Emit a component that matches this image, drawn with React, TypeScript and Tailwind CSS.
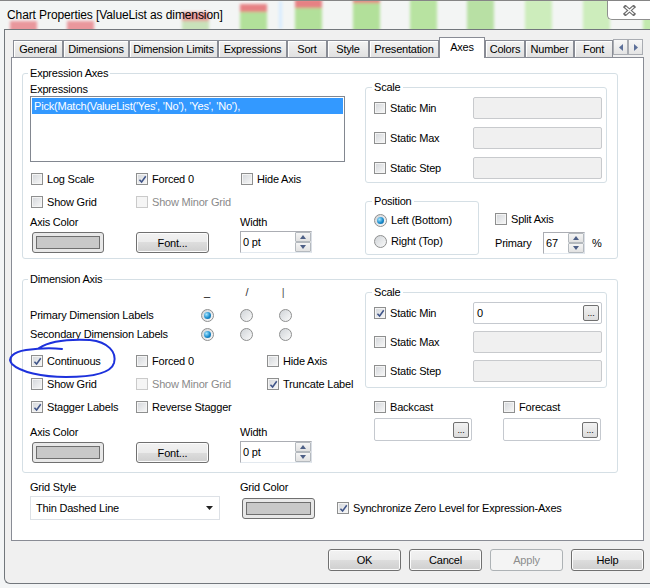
import type { ReactNode } from 'react';

const tabs = [
  { label: 'General', w: 'w-[50px]' },
  { label: 'Dimensions', w: 'w-[66px]' },
  { label: 'Dimension Limits', w: 'w-[89px]' },
  { label: 'Expressions', w: 'w-[69px]' },
  { label: 'Sort', w: 'w-[40px]' },
  { label: 'Style', w: 'w-[42px]' },
  { label: 'Presentation', w: 'w-[70px]' },
  { label: 'Axes', w: 'w-[46px]', active: true },
  { label: 'Colors', w: 'w-[40px]' },
  { label: 'Number', w: 'w-[49px]' },
  { label: 'Font', w: 'w-[39px]' },
];

// title bar glass: blurred chart bars behind the window
const blobs = [
  { x: 10, y: 20, h: 12, c: '#e9979c' },
  { x: 67, y: 20, h: 12, c: '#e9979c' },
  { x: 182, y: 11, h: 9, c: '#e79a9a' },
  { x: 182, y: 20, h: 12, c: '#c9e2ba' },
  { x: 240, y: 3, h: 8, c: '#e68184' },
  { x: 240, y: 11, h: 20, c: '#b2e09a' },
  { x: 295, y: -2, h: 9, c: '#e68184' },
  { x: 295, y: 7, h: 24, c: '#b2e09a' },
  { x: 353, y: -2, h: 4, c: '#e68184' },
  { x: 353, y: 2, h: 29, c: '#b2e09a' },
  { x: 410, y: -2, h: 33, c: '#b8e3a1' },
  { x: 467, y: -2, h: 33, c: '#b8e0a4' },
  { x: 525, y: -2, h: 33, c: '#cdedbc' },
  { x: 583, y: -2, h: 33, c: '#cdedbc' },
  { x: 643, y: -2, h: 33, c: '#c2eaae' },
];

function TitleBar() {
  return (
    <div className="relative flex h-[29px] justify-between border-t border-[#858585]">
      <svg className="absolute inset-0" width="650" height="28" viewBox="0 0 650 28">
        <defs>
          <filter id="glass" x="-20%" y="-20%" width="140%" height="140%">
            <feGaussianBlur stdDeviation="1.6" />
          </filter>
        </defs>
        <rect width="650" height="28" fill="#f3f5f4" />
        <g filter="url(#glass)">
          {blobs.map((b, i) => (
            <rect key={i} x={b.x} y={b.y} width="27" height={b.h} fill={b.c} />
          ))}
          <rect x="279" y="0" width="3" height="28" fill="#d6ebff" />
        </g>
      </svg>
      <span className="relative pl-[7px] pt-[7px] text-[12px] leading-[14px] tracking-[-0.1px]">
        Chart Properties [ValueList as dimension]
      </span>
      <span className="relative flex h-[19px] w-[43px] items-center justify-center rounded-bl-[5px] border-b border-l border-[#8f8f8f] bg-white">
        <svg width="13" height="11" viewBox="0 0 13 11">
          <path d="M2.5 2 L10.5 9 M10.5 2 L2.5 9" stroke="#6b6b6b" strokeWidth="3.6" strokeLinecap="square" />
          <path d="M2.5 2 L10.5 9 M10.5 2 L2.5 9" stroke="#fff" strokeWidth="1.4" />
        </svg>
      </span>
    </div>
  );
}

function Box({ on = false, off = false }: { on?: boolean; off?: boolean }) {
  return (
    <span
      className={
        off
          ? 'flex h-[12px] w-[12px] shrink-0 border border-[#cacaca] bg-[#f5f5f5]'
          : 'flex h-[12px] w-[12px] shrink-0 items-center justify-center border border-[#8e8f8f] bg-gradient-to-br from-[#d3d6da] to-[#f8f8f8] shadow-[inset_0_0_0_1px_#f4f4f4]'
      }
    >
      {on && (
        <svg viewBox="0 0 10 10" className="h-[9px] w-[9px]">
          <path d="M1.6 5.2 L4 7.8 L8.6 1.4" fill="none" stroke="#3f5488" strokeWidth="1.7" />
        </svg>
      )}
    </span>
  );
}

function Check({ label, on = false, off = false }: { label: string; on?: boolean; off?: boolean }) {
  return (
    <div className="flex h-[14px] items-center gap-[4px] whitespace-nowrap">
      <Box on={on} off={off} />
      <span className={off ? 'text-[#8a8a8a]' : ''}>{label}</span>
    </div>
  );
}

function Radio({ on = false }: { on?: boolean }) {
  return (
    <span className="flex h-[13px] w-[13px] shrink-0 items-center justify-center rounded-full border border-[#8e8f8f] bg-gradient-to-br from-[#d0d4d8] to-[#fafafa]">
      {on && (
        <span className="h-[7px] w-[7px] rounded-full bg-[radial-gradient(circle_at_35%_35%,#a6e6ff,#1a8bcc_55%,#0b5a8f)]" />
      )}
    </span>
  );
}

function Button({ children, className, disabled = false }: { children: ReactNode; className: string; disabled?: boolean }) {
  return (
    <div
      className={
        disabled
          ? `flex items-center justify-center rounded-[3px] border border-[#adb2b5] bg-[#f4f4f4] text-[#8d8d8d] ${className}`
          : `flex items-center justify-center rounded-[3px] border border-[#707070] bg-[linear-gradient(#f2f2f2,#ebebeb_50%,#dddddd_50%,#cfcfcf)] shadow-[inset_0_0_0_1px_#fcfcfc] ${className}`
      }
    >
      {children}
    </div>
  );
}

function Swatch({ className }: { className: string }) {
  return (
    <div className={`rounded-[3px] border border-[#707070] bg-[#e8e8e8] p-[3px] ${className}`}>
      <div className="h-full w-full border border-[#6e6e6e] bg-[#c8c8c8]" />
    </div>
  );
}

function Dots() {
  return (
    <span className="flex h-[16px] w-[16px] items-end justify-center rounded-[2px] border border-[#707070] bg-[linear-gradient(#f2f2f2,#dcdcdc)] pb-[2px] text-[9px] leading-[9px]">
      ...
    </span>
  );
}

function Field({ className, value, dots = false, on = false }: { className: string; value?: string; dots?: boolean; on?: boolean }) {
  return (
    <div
      className={
        on || dots
          ? `flex items-center justify-between rounded-[2px] border border-[#c5c9cf] bg-white pl-[3px] pr-[2px] ${className}`
          : `rounded-[2px] border border-[#c8cacd] bg-[#f0f0f0] ${className}`
      }
    >
      <span>{value}</span>
      {dots && <Dots />}
    </div>
  );
}

function Arrow({ up }: { up?: boolean }) {
  return (
    <span className="flex h-[10px] w-[16px] items-center justify-center rounded-[1px] border border-[#b4b9be] bg-gradient-to-b from-[#f5f5f5] to-[#e2e2e2]">
      <svg width="6" height="4" viewBox="0 0 6 4">
        <path d={up ? 'M0 4 L3 0 L6 4 Z' : 'M0 0 L6 0 L3 4 Z'} fill="#4d5f86" />
      </svg>
    </span>
  );
}

function Spin({ value, className }: { value: string; className: string }) {
  return (
    <div className={`flex border border-[#abadb3] border-b-[#e3e9ef] border-r-[#dbdfe6] bg-white ${className}`}>
      <span className="flex-1 pl-[2px] pt-[3px]">{value}</span>
      <div className="flex flex-col justify-center">
        <Arrow up />
        <Arrow />
      </div>
    </div>
  );
}

function Group({ title, className, children }: { title: string; className: string; children: ReactNode }) {
  return (
    <fieldset className={`rounded-[3px] border border-[#d5dfe5] ${className}`}>
      <legend className="ml-[6px] px-[2px] leading-[14px]">{title}</legend>
      {children}
    </fieldset>
  );
}

function ScaleRow({ label, on = false, value, dots = false }: { label: string; on?: boolean; value?: string; dots?: boolean }) {
  return (
    <div className="flex items-center">
      <div className="w-[99px]">
        <Check label={label} on={on} />
      </div>
      <Field className="h-[22px] w-[129px]" value={value} dots={dots} on={on} />
    </div>
  );
}

function ExpressionAxes() {
  return (
    <fieldset className="h-[193px] w-[596px] rounded-[3px] border border-[#d5dfe5]">
      <legend className="ml-[5px] px-[2px] leading-[14px]">Expression Axes</legend>
      <div className="flex">
        <div className="ml-[7px] w-[315px]">
          <div className="mt-[2px]">Expressions</div>
          <div className="h-[66px] border border-[#828790] bg-white p-[1px]">
            <div className="h-[16px] bg-[#3399ff] pl-[2px] leading-[16px] text-white">
              Pick(Match(ValueList('Yes', 'No'), 'Yes', 'No'),
            </div>
          </div>
          <div className="mt-[10px] grid grid-cols-[105px_105px_auto] pl-[1px]">
            <Check label="Log Scale" />
            <Check label="Forced 0" on />
            <Check label="Hide Axis" />
          </div>
          <div className="mt-[9px] grid grid-cols-[105px_105px_auto] pl-[1px]">
            <Check label="Show Grid" />
            <Check label="Show Minor Grid" off />
          </div>
          <div className="mt-[6px] grid grid-cols-[210px_auto]">
            <span>Axis Color</span>
            <span>Width</span>
          </div>
          <div className="mt-[2px] flex items-start">
            <Swatch className="ml-[2px] mt-[1px] h-[21px] w-[72px]" />
            <Button className="ml-[32px] mt-[1px] h-[21px] w-[73px]">Font...</Button>
            <Spin value="0 pt" className="ml-[31px] h-[22px] w-[72px]" />
          </div>
        </div>
        <div className="ml-[20px] w-[242px]">
          <Group title="Scale" className="h-[103px] w-[242px]">
            <div className="mt-[3px] flex flex-col gap-[8px] pl-[8px]">
              <ScaleRow label="Static Min" />
              <ScaleRow label="Static Max" />
              <ScaleRow label="Static Step" />
            </div>
          </Group>
          <div className="mt-[11px] flex">
            <Group title="Position" className="h-[61px] w-[114px]">
              <div className="mt-[5px] flex flex-col gap-[7px] pl-[8px]">
                <div className="flex h-[14px] items-center gap-[4px]">
                  <Radio on />
                  <span>Left (Bottom)</span>
                </div>
                <div className="flex h-[14px] items-center gap-[4px]">
                  <Radio />
                  <span>Right (Top)</span>
                </div>
              </div>
            </Group>
            <div className="ml-[16px] mt-[18px]">
              <Check label="Split Axis" />
              <div className="mt-[6px] flex items-center">
                <span className="w-[48px]">Primary</span>
                <Spin value="67" className="h-[22px] w-[42px]" />
                <span className="ml-[7px]">%</span>
              </div>
            </div>
          </div>
        </div>
      </div>
    </fieldset>
  );
}

function DimensionAxis() {
  return (
    <fieldset className="mt-[13px] h-[201px] w-[596px] rounded-[3px] border border-[#d5dfe5]">
      <legend className="ml-[5px] px-[2px] leading-[14px]">Dimension Axis</legend>
      <div className="flex">
        <div className="ml-[7px] w-[315px]">
          <div className="flex h-[12px] pl-[171px] leading-[12px]">
            <span className="w-[39px]"><span className="block w-[12px] text-center">_</span></span>
            <span className="w-[39px]"><span className="block w-[14px] text-center text-[#333]">/</span></span>
            <span className="w-[39px]"><span className="block w-[8px] text-center text-[#555]">|</span></span>
          </div>
          <div className="mt-[10px] flex h-[14px] items-center">
            <span className="w-[171px]">Primary Dimension Labels</span>
            <span className="w-[39px]"><Radio on /></span>
            <span className="w-[39px]"><Radio /></span>
            <span className="w-[39px]"><Radio /></span>
          </div>
          <div className="mt-[5px] flex h-[14px] items-center">
            <span className="w-[171px]">Secondary Dimension Labels</span>
            <span className="w-[39px]"><Radio on /></span>
            <span className="w-[39px]"><Radio /></span>
            <span className="w-[39px]"><Radio /></span>
          </div>
          <div className="mt-[13px] grid grid-cols-[105px_131px_auto] pl-[1px]">
            <Check label="Continuous" on />
            <Check label="Forced 0" />
            <Check label="Hide Axis" />
          </div>
          <div className="mt-[9px] grid grid-cols-[105px_131px_auto] pl-[1px]">
            <Check label="Show Grid" />
            <Check label="Show Minor Grid" off />
            <Check label="Truncate Label" on />
          </div>
          <div className="mt-[9px] grid grid-cols-[105px_131px_auto] pl-[1px]">
            <Check label="Stagger Labels" on />
            <Check label="Reverse Stagger" />
          </div>
          <div className="mt-[11px] grid grid-cols-[210px_auto]">
            <span>Axis Color</span>
            <span>Width</span>
          </div>
          <div className="mt-[2px] flex items-start">
            <Swatch className="ml-[2px] mt-[1px] h-[21px] w-[72px]" />
            <Button className="ml-[32px] mt-[1px] h-[21px] w-[73px]">Font...</Button>
            <Spin value="0 pt" className="ml-[31px] h-[22px] w-[72px]" />
          </div>
        </div>
        <div className="ml-[20px] w-[242px]">
          <Group title="Scale" className="-mt-[1px] h-[103px] w-[242px]">
            <div className="mt-[3px] flex flex-col gap-[7px] pl-[8px]">
              <ScaleRow label="Static Min" on value="0" dots />
              <ScaleRow label="Static Max" />
              <ScaleRow label="Static Step" />
            </div>
          </Group>
          <div className="mt-[12px] flex pl-[9px]">
            <div className="w-[129px]">
              <Check label="Backcast" />
            </div>
            <Check label="Forecast" />
          </div>
          <div className="mt-[4px] flex pl-[9px]">
            <Field className="h-[23px] w-[98px]" dots />
            <Field className="ml-[31px] h-[23px] w-[98px]" dots />
          </div>
        </div>
      </div>
    </fieldset>
  );
}

function Scribble() {
  return (
    <svg className="pointer-events-none absolute left-0 top-0" width="650" height="588" viewBox="0 0 650 588">
      <path
        d="M39 348 C50 341 70 339 90 340 C108 342 117 352 114 363 C111 373 92 377 66 377 C42 377 20 372 12 364 C7 358 13 352 26 350 C40 348 54 348 62 349"
        fill="none"
        stroke="#1d31dc"
        strokeWidth="2"
        strokeLinecap="round"
      />
    </svg>
  );
}

export default function App() {
  return (
    <div className="relative h-[588px] w-[650px] overflow-hidden bg-[#f3f5f6] font-['Liberation_Sans',Arial,sans-serif] text-[11px] leading-[14px] tracking-[-0.2px] text-black">
      <TitleBar />
      <div className="ml-[4px] h-[555px] w-[660px] rounded-bl-[6px] border-b border-l border-t border-[#72777c] bg-[#f0f0f0] pl-[6px] pt-[7px]">
        <div className="relative z-10 -mb-px flex h-[21px] items-end pl-[2px]">
          {tabs.map((t) =>
            t.active ? (
              <div key={t.label} className={`h-[21px] border-l border-r border-t border-[#898c95] bg-white pt-[2px] text-center ${t.w}`}>
                {t.label}
              </div>
            ) : (
              <div
                key={t.label}
                className={`mb-px flex h-[17px] items-center justify-center border-l border-r border-t border-[#898c95] bg-gradient-to-b from-[#f3f3f3] to-[#e1e1e1] shadow-[inset_1px_1px_0_#fff] ${t.w}`}
              >
                {t.label}
              </div>
            ),
          )}
          <div className="mb-[3px] flex self-end">
            <span className="flex h-[16px] w-[15px] items-center justify-center border border-[#a9acb2] bg-gradient-to-b from-[#f7f7f7] to-[#e4e4e4]">
              <svg width="4" height="7" viewBox="0 0 4 7"><path d="M4 0 L0 3.5 L4 7 Z" fill="#5c6f99" /></svg>
            </span>
            <span className="flex h-[16px] w-[15px] items-center justify-center border border-[#a9acb2] bg-gradient-to-b from-[#f7f7f7] to-[#e4e4e4]">
              <svg width="4" height="7" viewBox="0 0 4 7"><path d="M0 0 L4 3.5 L0 7 Z" fill="#5c6f99" /></svg>
            </span>
          </div>
        </div>
        <div className="h-[484px] w-[633px] border border-[#898c95] bg-white pl-[10px] pt-[8px]">
          <ExpressionAxes />
          <DimensionAxis />
          <div className="mt-[7px] grid grid-cols-[210px_auto] pl-[8px]">
            <span>Grid Style</span>
            <span>Grid Color</span>
          </div>
          <div className="mt-[2px] flex items-center pl-[8px]">
            <div className="flex h-[24px] w-[190px] items-center justify-between border border-[#dde1e6] bg-white pl-[5px] pr-[6px]">
              <span>Thin Dashed Line</span>
              <svg width="7" height="4" viewBox="0 0 7 4"><path d="M0 0 L7 0 L3.5 4 Z" fill="#222" /></svg>
            </div>
            <Swatch className="ml-[22px] h-[21px] w-[73px]" />
            <div className="ml-[22px]">
              <Check label="Synchronize Zero Level for Expression-Axes" on />
            </div>
          </div>
        </div>
        <div className="mt-[8px] flex w-[633px] justify-end gap-[8px]">
          <Button className="h-[22px] w-[73px]">OK</Button>
          <Button className="h-[22px] w-[73px]">Cancel</Button>
          <Button className="h-[22px] w-[73px]" disabled>Apply</Button>
          <Button className="h-[22px] w-[73px]">Help</Button>
        </div>
      </div>
      <Scribble />
    </div>
  );
}
